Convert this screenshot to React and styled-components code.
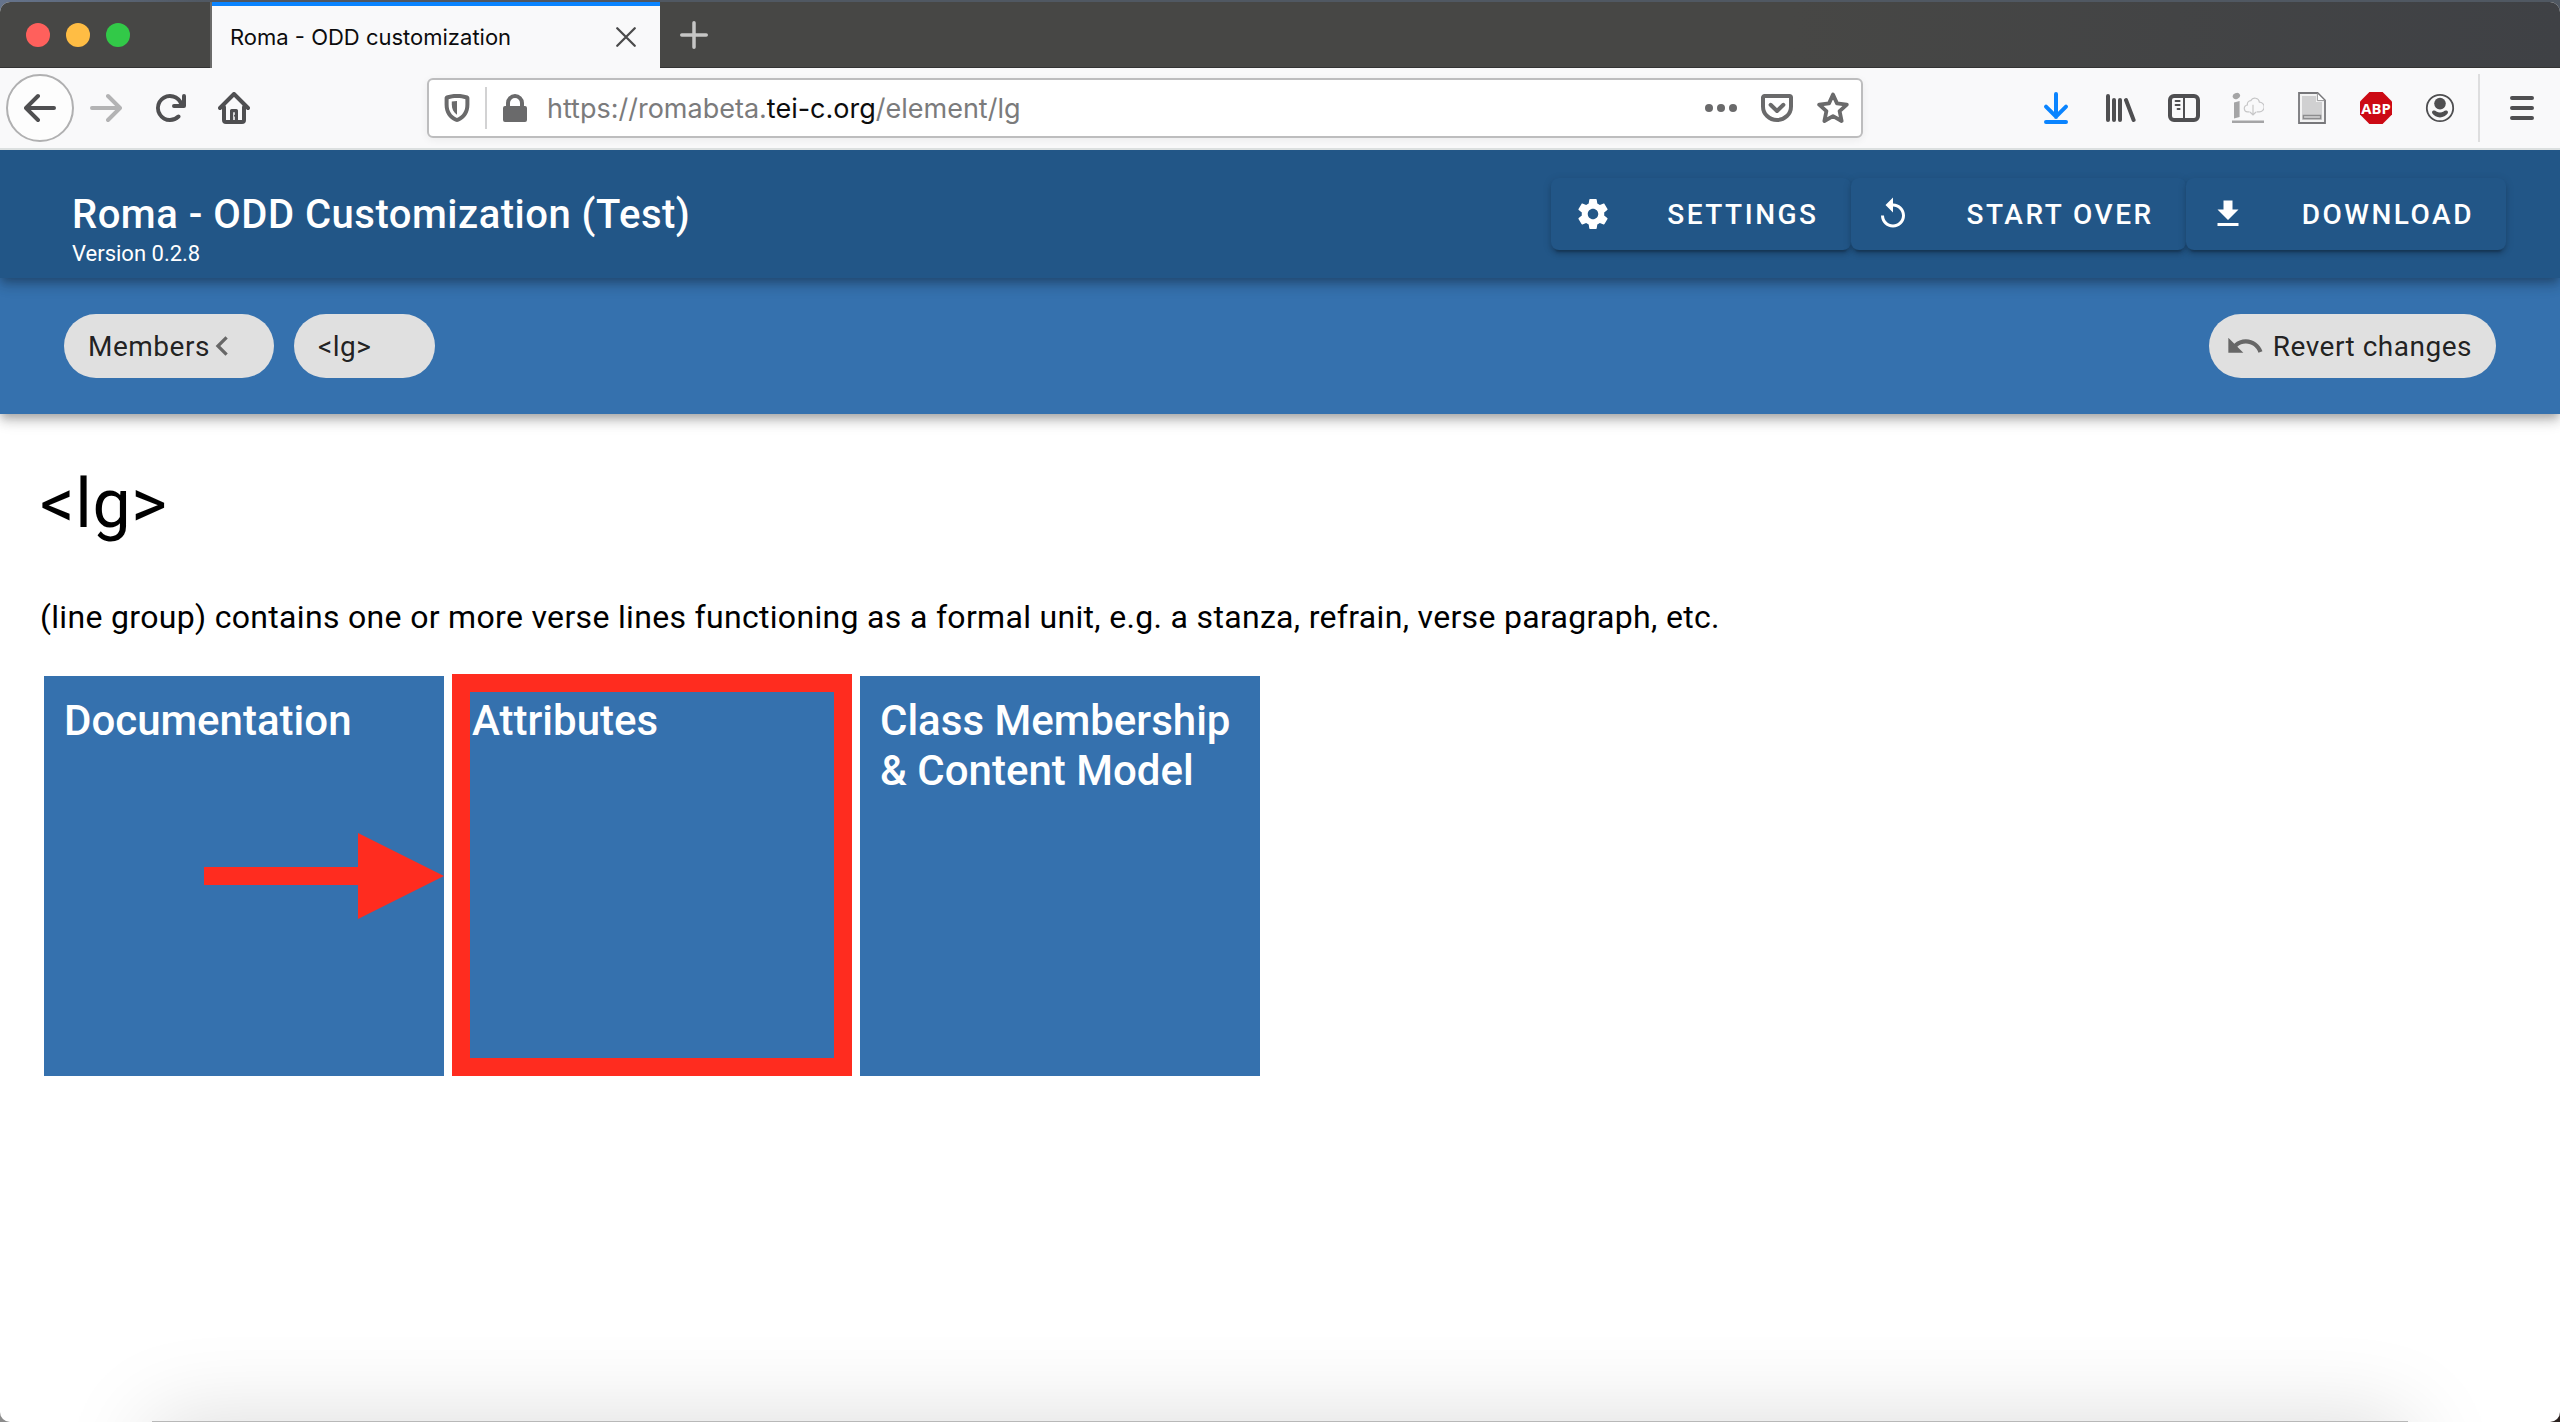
import React from "react";
import styled, { createGlobalStyle, css } from "styled-components";

const uiFont = `Inter, "Liberation Sans", sans-serif`;
const appFont = `Roboto, "Liberation Sans", sans-serif`;
const navy = "#225687";
const blue = "#3571ae";
const red = "#ff2c1f";

const GlobalStyle = createGlobalStyle`
  *, *::before, *::after { box-sizing: border-box; }
  body {
    margin: 0;
    background:
      linear-gradient(to right, #66748c, #505862 8%, #505862) top / 100% 40px no-repeat,
      linear-gradient(to right, #8c8c8c, #2b2220);
  }
  button { border: 0; padding: 0; margin: 0; background: none; font: inherit; color: inherit; cursor: pointer; }
  svg { display: block; }
`;

/* ---------- browser window ---------- */

const Desktop = styled.div`
  min-height: 100vh;
  padding-top: 2px;
  display: flex;
  flex-direction: column;
`;

const BrowserWindow = styled.div`
  flex: 1;
  display: flex;
  flex-direction: column;
  position: relative;
  overflow: hidden;
  border-radius: 10px;
  background: #fff;
`;

const TabStrip = styled.div`
  height: 66px;
  display: flex;
  align-items: stretch;
  background: linear-gradient(to right, #474745 70%, #3f4145);
  box-shadow: inset 0 -1px 0 #333;
`;

const WindowControls = styled.div`
  width: 212px;
  padding-left: 26px;
  display: flex;
  align-items: center;
  gap: 16px;
  border-right: 2px solid #6b6b6a;
`;

const WindowControl = styled.button`
  width: 24px;
  height: 24px;
  border-radius: 50%;
  background: ${(p) => p.$color};
`;

const Tab = styled.div`
  width: 448px;
  padding: 0 20px 0 18px;
  display: flex;
  align-items: center;
  justify-content: space-between;
  background: #f9f9fa;
  border-top: 4px solid #0a84ff;
  font: 400 22px/32px ${uiFont};
  color: #0c0c0d;
`;

const TabButton = styled.button`
  width: 28px;
  display: grid;
  place-items: center;
  color: ${(p) => p.$color};
`;

const NewTabButton = styled(TabButton)`
  width: 68px;
`;

const Toolbar = styled.div`
  position: relative;
  z-index: 3;
  height: 82px;
  padding: 0 6px;
  display: flex;
  align-items: center;
  background: #f9f9fa;
  border-bottom: 2px solid #dce0e0;
  color: #4f4f51;
`;

const ToolButton = styled.button`
  width: 64px;
  height: 64px;
  flex: none;
  display: grid;
  place-items: center;
  ${(p) => p.$round && css`
    width: 68px;
    height: 68px;
    border: 2px solid #b0b0b1;
    border-radius: 50%;
    background: #fdfdfd;
  `}
  &:disabled { color: #b3b3b4; cursor: default; }
`;

const Spacer = styled.div`
  flex: 4;
`;

const Divider = styled.div`
  width: 2px;
  height: 68px;
  margin: 0 10px 0 6px;
  background: #dededf;
`;

const AddressBar = styled.div`
  flex: 35;
  height: 60px;
  padding: 0 12px;
  display: flex;
  align-items: center;
  border: 2px solid #bdbdbe;
  border-radius: 6px;
  background: #fff;
  box-shadow: 0 2px 8px rgba(0, 0, 0, 0.06);
  color: #6a6a6b;
`;

const AddressButton = styled.button`
  width: 32px;
  height: 40px;
  display: grid;
  place-items: center;
`;

const AddressDivider = styled.div`
  width: 2px;
  height: 42px;
  margin: 0 12px;
  background: #d2d2d3;
`;

const Url = styled.div`
  flex: 1;
  padding: 2px 0 0 16px;
  font: 400 27px/32px ${uiFont};
  color: #7b7b7c;
  outline: none;
  white-space: nowrap;
`;

const Domain = styled.span`
  color: #0c0c0d;
`;

const PageActions = styled.div`
  display: flex;
  gap: 24px;
`;

/* ---------- application ---------- */

const elevation = css`
  box-shadow:
    0 4px 8px -2px rgba(0, 0, 0, 0.2),
    0 8px 10px rgba(0, 0, 0, 0.14),
    0 2px 20px rgba(0, 0, 0, 0.12);
`;

const AppHeader = styled.header`
  position: relative;
  z-index: 2;
  padding: 0 54px 0 72px;
  display: flex;
  align-items: center;
  justify-content: space-between;
  background: ${navy};
  color: #fff;
  font-family: ${appFont};
  ${elevation}
`;

const Brand = styled.div`
  padding: 40px 0 10px;
`;

const BrandName = styled.div`
  font-size: 40px;
  line-height: 50px;
  font-weight: 500;
  letter-spacing: 0.0125em;
`;

const Version = styled.div`
  font-size: 22px;
  line-height: 28px;
`;

const HeaderActions = styled.div`
  display: flex;
`;

const ActionButton = styled.button`
  height: 72px;
  padding: 0 32px 0 24px;
  display: flex;
  align-items: center;
  gap: 56px;
  border-radius: 8px;
  background: ${navy};
  font: 500 28px/32px ${appFont};
  letter-spacing: 0.09em;
  text-transform: uppercase;
  box-shadow:
    0 6px 2px -4px rgba(0, 0, 0, 0.2),
    0 4px 4px rgba(0, 0, 0, 0.14),
    0 2px 10px rgba(0, 0, 0, 0.12);
`;

const Label = styled.span`
  padding-top: 2px;
`;

const Breadcrumbs = styled.nav`
  position: relative;
  z-index: 1;
  padding: 36px 64px;
  display: flex;
  gap: 20px;
  background: ${blue};
  ${elevation}
`;

const Chip = styled.button`
  height: 64px;
  padding: ${(p) => (p.$leading ? "0 24px 0 16px" : "0 24px")};
  margin-left: ${(p) => (p.$end ? "auto" : "0")};
  display: flex;
  align-items: center;
  gap: ${(p) => (p.$leading ? 8 : 4)}px;
  border-radius: 32px;
  background: #e0e0e0;
  color: rgba(0, 0, 0, 0.87);
  font: 400 28px/40px ${appFont};
  letter-spacing: 0.018em;
`;

const ChipIcon = styled.span`
  width: ${(p) => p.$size}px;
  height: ${(p) => p.$size}px;
  color: rgba(0, 0, 0, 0.54);
`;

const Content = styled.main`
  flex: 1;
  padding: 50px 40px 96px;
  font-family: ${appFont};
  color: #000;
`;

const ElementName = styled.h1`
  margin: 0 0 48px;
  font-size: 68px;
  line-height: 80px;
  font-weight: 400;
  letter-spacing: 0.01em;
`;

const Description = styled.p`
  margin: 0 0 34px;
  font-size: 32px;
  line-height: 50px;
  letter-spacing: 0.01em;
`;

const Tiles = styled.div`
  padding-left: 4px;
  display: flex;
  gap: 8px;
`;

const Tile = styled.button`
  position: relative;
  width: 400px;
  height: 400px;
  padding: 20px;
  display: flex;
  align-items: flex-start;
  background: ${blue};
  color: #fff;
  text-align: left;
  font: 500 42px/50px ${appFont};
`;

const Highlight = styled.span`
  position: absolute;
  inset: -2px 0 0;
  border: 18px solid ${red};
`;

const Pointer = styled.svg`
  position: absolute;
  right: 0;
  top: 157px;
`;

const DockShadow = styled.div`
  position: absolute;
  left: 152px;
  right: 152px;
  bottom: -199px;
  height: 200px;
  background: #b8b8b8;
  box-shadow: 0 0 90px rgba(0, 0, 0, 0.15);
`;

/* ---------- icons ---------- */

const Glyph = ({ size = 32, children, ...rest }) => (
  <svg width={size} height={size} viewBox="0 0 16 16" fill="currentColor" aria-hidden="true" {...rest}>
    {children}
  </svg>
);

const Line = ({ size = 32, w = 2, children }) => (
  <Glyph size={size} fill="none" stroke="currentColor" strokeWidth={w} strokeLinecap="round" strokeLinejoin="round">
    {children}
  </Glyph>
);

const Material = ({ size = 36, viewBox = "0 0 24 24", d }) => (
  <svg width={size} height={size} viewBox={viewBox} fill="currentColor" aria-hidden="true">
    <path d={d} />
  </svg>
);

const backPath = "M15 7H3.414l4.293-4.293a1 1 0 0 0-1.414-1.414l-6 6a1 1 0 0 0 0 1.414l6 6a1 1 0 0 0 1.414-1.414L3.414 9H15a1 1 0 0 0 0-2z";
const BackIcon = () => <Glyph><path d={backPath} /></Glyph>;
const ForwardIcon = () => <Glyph><path transform="matrix(-1 0 0 1 16 0)" d={backPath} /></Glyph>;
const ReloadIcon = () => (
  <Glyph><path d="M15 1a1 1 0 0 0-1 1v2.418A6.995 6.995 0 1 0 8 15a6.954 6.954 0 0 0 4.95-2.05 1 1 0 0 0-1.414-1.414A5.019 5.019 0 1 1 12.549 6H10a1 1 0 0 0 0 2h5a1 1 0 0 0 1-1V2a1 1 0 0 0-1-1z" /></Glyph>
);
const HomeIcon = () => (
  <Line>
    <path d="M1 8l7-7 7 7" />
    <path d="M3 7.500V14a1 1 0 0 0 1 1h8a1 1 0 0 0 1-1V7.500" />
    <path d="M6.800 14.500V9.300h2.400v5.200" strokeWidth="1.600" />
    <path d="M8.500 11.900h.01" strokeWidth="1" />
  </Line>
);
const ShieldIcon = () => (
  <Glyph>
    <path fillRule="evenodd" d="M8 1c2.200 0 4 .3 5.300.8.500.2.900.7.900 1.300v3.200c0 4.200-2 7-5.300 8.500a2.200 2.200 0 0 1-1.800 0C3.800 13.300 1.800 10.500 1.800 6.300V3.100c0-.6.400-1.100.9-1.300C4 1.300 5.800 1 8 1zm0 2c-1.700 0-3.100.2-4.200.6v2.700c0 3.400 1.500 5.500 4.200 6.700 2.700-1.200 4.200-3.300 4.200-6.700V3.600C11.100 3.200 9.700 3 8 3z" />
    <path d="M8 4.500v6.900C6.300 10.300 5.400 8.700 5.400 6.300V4.800C6.200 4.600 7 4.500 8 4.500z" />
  </Glyph>
);
const LockIcon = () => (
  <Glyph>
    <path d="M13 7h-.5V5.500a4.500 4.500 0 0 0-9 0V7H3a1 1 0 0 0-1 1v6a1 1 0 0 0 1 1h10a1 1 0 0 0 1-1V8a1 1 0 0 0-1-1zM5.500 5.500a2.500 2.500 0 0 1 5 0V7h-5z" />
  </Glyph>
);
const DotsIcon = () => <Glyph><circle cx="2" cy="8" r="2" /><circle cx="8" cy="8" r="2" /><circle cx="14" cy="8" r="2" /></Glyph>;
const PocketIcon = () => (
  <Line>
    <path d="M1.800 2h12.400a.8.800 0 0 1 .8.800v4.400a7 6.800 0 0 1-14 0V2.800a.8.800 0 0 1 .8-.8z" />
    <path d="M4.800 6.400L8 9.500l3.200-3.100" />
  </Line>
);
const StarIcon = () => (
  <Line w={1.9}>
    <path d="M8 1.300l2 4.400 4.900.6-3.600 3.300 1 4.900L8 12.100l-4.300 2.400 1-4.900L1.100 6.300 6 5.700z" />
  </Line>
);
const DownloadsIcon = () => (
  <Line><path d="M8 1v11.500M3 7.300l5 5 5-5M3 15h10" /></Line>
);
const LibraryIcon = () => (
  <Line><path d="M2 2v12M5 4v10M8 4v10M11 4l3.800 10" /></Line>
);
const SidebarIcon = () => (
  <Line>
    <rect x="1" y="2" width="14" height="12" rx="2" />
    <path d="M8 2.500v11" strokeWidth="1" />
    <path d="M3.800 4.500h2M3.800 6.500h2M4.800 8.500h1" strokeWidth="1" />
  </Line>
);
const InfoCloudIcon = () => (
  <Glyph>
    <g fill="#a5a5a6">
      <ellipse cx="2.200" cy="2" rx="1.900" ry="1.500" transform="rotate(-25 2.200 2)" />
      <path d="M1 5.300l2.800-.8v8L1 13.200zM0 14.200h16v1.300H0z" />
    </g>
    <g fill="none" stroke="#c6c6c7" strokeWidth=".6">
      <path d="M8.800 9.900H8a1.700 1.700 0 0 1-.3-3.400 1.800 1.800 0 0 1 1.700-2.200 2.300 2.300 0 0 1 4.300.8 1.900 1.900 0 0 1 0 4.800h-1.400" />
      <path d="M10.500 6.400v5M9 10l1.500 1.500L12 10" />
    </g>
  </Glyph>
);
const PageIcon = () => (
  <Glyph>
    <path d="M1.500.500h9.300l3.700 3.700v11.300h-13z" fill="#f3f3f3" stroke="#77777a" strokeWidth=".9" />
    <path d="M3 2h7v3h3v9H3z" fill="#d0d0d1" />
    <path d="M10.700.800v3.500h3.500" fill="#fff" stroke="#98989a" strokeWidth=".5" />
    <path d="M3.700 11.700h8.600v1.600H3.700z" fill="#c4c4c5" stroke="#8c8c8e" strokeWidth=".7" />
  </Glyph>
);
const AdblockIcon = () => (
  <Glyph>
    <path d="M4.700 0h6.600L16 4.700v6.600L11.300 16H4.700L0 11.300V4.700z" fill="#cc0a14" />
    <text x="8" y="10.800" textAnchor="middle" fill="#fff" fontFamily="Open Sans, sans-serif" fontWeight="700" fontSize="7.400">ABP</text>
  </Glyph>
);
const AccountIcon = () => (
  <Glyph>
    <circle cx="8" cy="8" r="6.600" fill="none" stroke="currentColor" strokeWidth=".9" />
    <circle cx="8" cy="5.800" r="2.900" />
    <path d="M4.700 9.300c.6-.2 1 .1 1.500.4 1.100.7 2.500.7 3.600 0 .5-.3.900-.6 1.500-.4.700.2.900.9.500 1.500-.8 1.200-2.200 1.900-3.800 1.900s-3-.7-3.800-1.900c-.4-.6-.2-1.300.5-1.500z" />
  </Glyph>
);
const MenuIcon = () => <Line><path d="M3 3h10M3 8h10M3 13h10" /></Line>;
const CloseIcon = () => <Line size={20} w={1.8}><path d="M1 1l14 14M15 1L1 15" /></Line>;
const PlusIcon = () => <Line size={28} w={2}><path d="M8 1v14M1 8h14" /></Line>;

const materialPaths = {
  settings: "M19.430 12.980c.04-.32.07-.64.07-.98s-.03-.66-.07-.98l2.110-1.650c.19-.15.24-.42.12-.64l-2-3.460c-.12-.22-.39-.3-.61-.22l-2.490 1c-.52-.4-1.080-.73-1.690-.98l-.38-2.650C14.460 2.180 14.250 2 14 2h-4c-.25 0-.46.18-.49.42l-.38 2.650c-.61.25-1.170.59-1.690.98l-2.490-1c-.23-.09-.49 0-.61.22l-2 3.460c-.13.22-.07.49.12.64l2.110 1.650c-.04.32-.07.65-.07.98s.03.66.07.98l-2.110 1.650c-.19.15-.24.42-.12.64l2 3.460c.12.22.39.3.61.22l2.490-1c.52.4 1.080.73 1.690.98l.38 2.650c.03.24.24.42.49.42h4c.25 0 .46-.18.49-.42l.38-2.650c.61-.25 1.170-.59 1.690-.98l2.490 1c.23.09.49 0 .61-.22l2-3.460c.12-.22.07-.49-.12-.64l-2.110-1.650zM12 15.500c-1.930 0-3.500-1.570-3.500-3.500s1.570-3.500 3.500-3.500 3.500 1.570 3.500 3.500-1.570 3.500-3.500 3.500z",
  replay: "M12 5V1L7 6l5 5V7c3.310 0 6 2.690 6 6s-2.690 6-6 6-6-2.690-6-6H4c0 4.420 3.580 8 8 8s8-3.580 8-8-3.580-8-8-8z",
  download: "M19 9h-4V3H9v6H5l7 7 7-7zM5 18v2h14v-2H5z",
  undo: "M12.500 8c-2.650 0-5.050.99-6.900 2.600L2 7v9h9l-3.620-3.620c1.390-1.160 3.160-1.880 5.120-1.880 3.540 0 6.550 2.310 7.600 5.500l2.370-.78C21.080 11.030 17.150 8 12.500 8z",
  chevron: "M15.410 16.590L10.830 12l4.580-4.590L14 6l-6 6 6 6z",
};

const extensions = [
  ["Downloads", DownloadsIcon, "#0a84ff"],
  ["Library", LibraryIcon],
  ["Sidebars", SidebarIcon],
  ["Save to archive", InfoCloudIcon],
  ["Page notes", PageIcon],
  ["Adblock Plus", AdblockIcon],
  ["Account", AccountIcon],
];

const headerActions = [
  ["Settings", "settings"],
  ["Start over", "replay"],
  ["Download", "download"],
];

const Colored = styled.span`
  color: ${(p) => p.$color || "inherit"};
`;

export default function App() {
  return (
    <Desktop>
      <GlobalStyle />
      <BrowserWindow>
        <TabStrip>
          <WindowControls>
            <WindowControl $color="#ff605c" aria-label="Close window" />
            <WindowControl $color="#ffbd44" aria-label="Minimise window" />
            <WindowControl $color="#32c948" aria-label="Zoom window" />
          </WindowControls>
          <Tab>
            <span>Roma - ODD customization</span>
            <TabButton $color="#4a4a4b" aria-label="Close tab"><CloseIcon /></TabButton>
          </Tab>
          <NewTabButton $color="#c6c6c5" aria-label="New tab"><PlusIcon /></NewTabButton>
        </TabStrip>

        <Toolbar>
          <ToolButton $round aria-label="Back"><BackIcon /></ToolButton>
          <ToolButton disabled aria-label="Forward"><ForwardIcon /></ToolButton>
          <ToolButton aria-label="Reload"><ReloadIcon /></ToolButton>
          <ToolButton aria-label="Home"><HomeIcon /></ToolButton>
          <Spacer />
          <AddressBar>
            <AddressButton aria-label="Tracking protection"><ShieldIcon /></AddressButton>
            <AddressDivider />
            <AddressButton aria-label="Site information"><LockIcon /></AddressButton>
            <Url role="textbox" aria-label="Address" contentEditable suppressContentEditableWarning spellCheck={false}>
              https://romabeta.<Domain>tei-c.org</Domain>/element/lg
            </Url>
            <PageActions>
              <AddressButton aria-label="Page actions"><DotsIcon /></AddressButton>
              <AddressButton aria-label="Save to Pocket"><PocketIcon /></AddressButton>
              <AddressButton aria-label="Bookmark"><StarIcon /></AddressButton>
            </PageActions>
          </AddressBar>
          <Spacer />
          {extensions.map(([label, Icon, color]) => (
            <ToolButton key={label} aria-label={label}>
              <Colored $color={color}><Icon /></Colored>
            </ToolButton>
          ))}
          <Divider />
          <ToolButton aria-label="Menu"><MenuIcon /></ToolButton>
        </Toolbar>

        <AppHeader>
          <Brand>
            <BrandName>Roma - ODD Customization (Test)</BrandName>
            <Version>Version 0.2.8</Version>
          </Brand>
          <HeaderActions>
            {headerActions.map(([label, icon]) => (
              <ActionButton key={label}>
                <Material d={materialPaths[icon]} />
                <Label>{label}</Label>
              </ActionButton>
            ))}
          </HeaderActions>
        </AppHeader>

        <Breadcrumbs>
          <Chip>
            <Label>Members</Label>
            <ChipIcon $size={36}><Material viewBox="7 1 22 22" d={materialPaths.chevron} /></ChipIcon>
          </Chip>
          <Chip>
            <Label>&lt;lg&gt;</Label>
            <ChipIcon $size={36} />
          </Chip>
          <Chip $leading $end>
            <ChipIcon $size={40}><Material size={40} d={materialPaths.undo} /></ChipIcon>
            <Label>Revert changes</Label>
          </Chip>
        </Breadcrumbs>

        <Content>
          <ElementName>&lt;lg&gt;</ElementName>
          <Description>
            (line group) contains one or more verse lines functioning as a formal unit, e.g. a stanza, refrain, verse paragraph, etc.
          </Description>
          <Tiles>
            <Tile>
              Documentation
              <Pointer width="240" height="86" viewBox="0 0 240 86" fill={red} aria-hidden="true">
                <path d="M0 34h154V0l86 43-86 43V52H0z" />
              </Pointer>
            </Tile>
            <Tile>
              Attributes
              <Highlight />
            </Tile>
            <Tile>Class Membership &amp; Content Model</Tile>
          </Tiles>
        </Content>
        <DockShadow />
      </BrowserWindow>
    </Desktop>
  );
}
